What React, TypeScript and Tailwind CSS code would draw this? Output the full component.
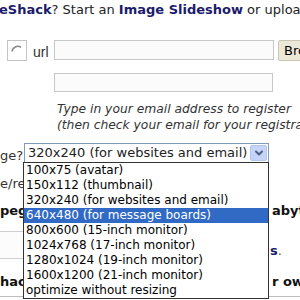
import { ChevronDown } from 'lucide-react';

const sizes = [
  '100x75 (avatar)',
  '150x112 (thumbnail)',
  '320x240 (for websites and email)',
  '640x480 (for message boards)',
  '800x600 (15-inch monitor)',
  '1024x768 (17-inch monitor)',
  '1280x1024 (19-inch monitor)',
  '1600x1200 (21-inch monitor)',
  'optimize without resizing',
];

export default function App() {
  return (
    <div className="relative w-[300px] h-[300px] overflow-hidden bg-white text-[13px] text-[#222] font-['DejaVu_Sans',sans-serif]">
      <p className="h-5 leading-5 whitespace-nowrap -ml-[1px]">
        <b className="text-[#1c1c6b]">eShack</b>? Start an <b className="text-[#1c1c6b]">Image Slideshow</b> or upload
      </p>

      {/* url row */}
      <div className="mt-5 flex items-start h-[21px] whitespace-nowrap">
        <div className="shrink-0 ml-[7px] w-5 h-[21px] border border-[#c4c4c4] bg-white flex items-center justify-center">
          <svg width="14" height="14" viewBox="0 0 14 14">
            <path d="M11 3.2A6 6 0 0 0 2 7.5" stroke="#8a8a8a" strokeWidth="1.6" fill="none" />
          </svg>
        </div>
        <span className="shrink-0 ml-[6px] w-[21px] mt-[4px] leading-[17px] text-[#333] font-['Liberation_Sans',sans-serif] text-[14px]">url</span>
        <div className="shrink-0 w-[220px] h-5 border border-[#c7c7c7] bg-[#fbfbfb]" />
        <div className="shrink-0 ml-[4px] w-[60px] h-[21px] border border-[#c9c6b6] rounded-[2px] bg-[#ece9d8] pl-[5px] leading-[19px] text-black">
          Browse...
        </div>
      </div>

      {/* email row */}
      <div className="mt-3 ml-[54px] w-[219px] h-[19px] border border-[#c7c7c7] bg-[#fbfbfb]" />
      <div className="mt-[9px] ml-[57px] italic text-[12.3px] leading-4 text-[#333] whitespace-nowrap">
        <div>Type in your email address to register</div>
        <div>(then check your email for your registration)</div>
      </div>

      {/* resize row */}
      <div className="mt-[10px] flex items-start h-5 whitespace-nowrap">
        <span className="shrink-0 w-6 leading-5 mt-[3px] text-[#333]">ge?</span>
        <div className="shrink-0 w-[245px] h-5 border border-[#7f9db9] bg-white flex items-center pl-[3px] pr-[1px]">
          <span className="flex-1 leading-[18px]">320x240 (for websites and email)</span>
          <div className="w-[17px] h-4 rounded-[2px] bg-[#c6d5f7] border border-[#b4c6ee] flex items-center justify-center">
            <ChevronDown className="w-3 h-3 text-[#4d6185]" strokeWidth={4} />
          </div>
        </div>
      </div>

      <div className="mt-[13px] w-[23px] overflow-hidden h-4 leading-4 whitespace-nowrap text-[#333]">e/re</div>

      <div className="mt-[11px] flex h-4 leading-4 whitespace-nowrap font-bold text-[#111]">
        <span className="shrink-0 w-[272px] overflow-hidden">peg</span>
        <span>abytes</span>
      </div>

      <div className="mt-3 flex h-7 whitespace-nowrap">
        <div className="shrink-0 w-[23px] border-y border-[#cfcfcf] bg-[#fcfcfc]" />
        <div className="shrink-0 w-[247px]" />
        <div className="flex items-end leading-4">
          <b className="text-[#1c1c6b]">s</b>
          <span className="text-[#555]">.</span>
        </div>
      </div>

      <div className="mt-[15px] flex h-4 leading-4 whitespace-nowrap font-bold text-[#111]">
        <span className="shrink-0 w-[272px] overflow-hidden">hac</span>
        <span>r own</span>
      </div>
      <div className="mt-[6px] border-t border-[#bdbdbd]" />

      {/* open dropdown list */}
      <ul className="absolute left-[23px] top-[162px] w-[246px] h-[137px] border border-[#333] bg-white text-[12px]">
        {sizes.map((s, i) => (
          <li
            key={s}
            className={
              i === 3
                ? 'h-[15px] leading-[15px] pl-[2px] bg-[#316ac5] text-white whitespace-nowrap'
                : 'h-[15px] leading-[15px] pl-[2px] text-black whitespace-nowrap'
            }
          >
            {s}
          </li>
        ))}
      </ul>
    </div>
  );
}
